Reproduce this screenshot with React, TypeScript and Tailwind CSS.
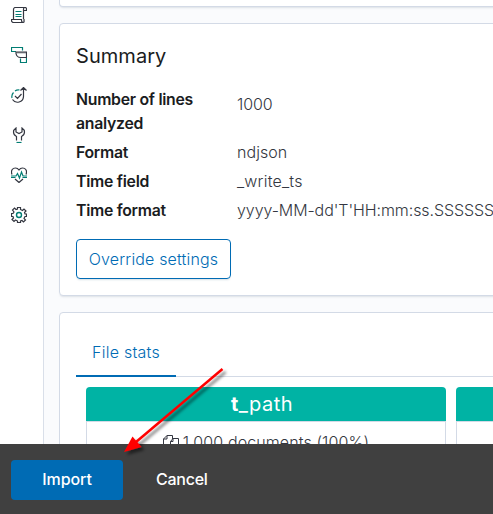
import React from 'react';

const dark = '#343741';
const teal = '#017d73';

function Icon({ children }: { children: React.ReactNode }) {
  return (
    <svg width="16" height="16" viewBox="0 0 32 32" fill="none" stroke={dark} strokeWidth="2.4" className="block">
      {children}
    </svg>
  );
}

function Sidebar() {
  return (
    <nav className="flex w-[44px] shrink-0 flex-col gap-6 border-r border-[#d9dfe9] bg-white pt-[7px] pl-[11px]">
      <Icon>
        <path d="M5 24V5a4 4 0 0 1 4-4h19a3 3 0 0 1 3 3v3h-6M25 24V4a3 3 0 0 1 3-3M1 25h20v2a4 4 0 0 0 4 4H5a4 4 0 0 1-4-4v-2zM25 31a4 4 0 0 0 1-4v-3" />
        <path d="M9 9h12M9 15h12M9 19h12" stroke={teal} />
      </Icon>
      <Icon>
        <path d="M10 9H1V1h22v6M19 23v8h12V21" stroke={teal} />
        <path d="M10 10h21v11H19c-5 0-8-3-9-8v-3z" />
        <path d="M11 11.500h19" strokeOpacity=".6" />
      </Icon>
      <Icon>
        <path d="M25 2v17a12 12 0 0 1-22 6M19 7l6-6 6 6M8 18l5 5 8-9" />
        <path d="M2 22a12 12 0 0 1 3-11M8 8a12 12 0 0 1 9-2" stroke={teal} />
      </Icon>
      <Icon>
        <path d="M11 27v-8c-4-2-6-5-6-9 0-3 2-6 5-8v8l6 3 6-3V2c3 2 5 5 5 8 0 4-2 7-6 9v8" />
        <path d="M11 31h10" stroke={teal} />
      </Icon>
      <Icon>
        <path d="M2 15C-1 7 3 2 9 2c3 0 5 1 7 4 2-3 4-4 7-4 6 0 10 5 7 13M8 24l8 7 8-7" />
        <path d="M0 18h10l3-5 4 9 4-12 3 8h8M0 21h9M23 21h9" stroke={teal} />
      </Icon>
      <Icon>
        <path d="M13 1h6v4l4 2 3-3 4 4-3 3 1 3h3v5h-3l-2 4 3 3-4 4-3-3-3 1v3h-6v-3l-4-2-3 3-4-4 3-3-1-3H1v-6h3l2-3-3-4 4-4 3 3 3-1V1z" />
        <circle cx="16" cy="16" r="5" stroke={teal} strokeWidth="2.8" />
      </Icon>
    </nav>
  );
}

const rows = [
  ['Format', 'ndjson', 'tracking-[0.05px]'],
  ['Time field', '_write_ts', 'tracking-[0.2px]'],
  ['Time format', "yyyy-MM-dd'T'HH:mm:ss.SSSSSSSSSZ", 'tracking-[-0.08px]'],
];

function Summary() {
  return (
    <section className="mt-4 h-[273px] w-[600px] shrink-0 rounded border border-[#d3dae6] bg-white px-4 pt-4 shadow-[0_2px_2px_-1px_rgba(152,162,179,0.3)]">
      <h2 className="text-[20px] leading-8 font-normal tracking-[0.05px] text-[#1a1c21]">Summary</h2>
      <dl className="mt-[15px] flex flex-col gap-[5px] leading-6">
        <div className="flex items-start">
          <dt className="relative top-px w-[161px] shrink-0 text-[15.8px] font-semibold tracking-[-0.27px] text-[#1a1c21]">
            Number of lines<br />analyzed
          </dt>
          <dd className="pt-[5px]">1000</dd>
        </div>
        {rows.map(([name, value, tracking]) => (
          <div className="flex" key={name}>
            <dt className="relative top-px w-[161px] shrink-0 text-[15.8px] font-semibold tracking-[-0.27px] text-[#1a1c21]">{name}</dt>
            <dd className={`whitespace-nowrap ${tracking}`}>{value}</dd>
          </div>
        ))}
      </dl>
      <button className="mt-[17px] block h-10 w-[155px] rounded border border-[#006bb4] pb-px text-center font-light tracking-[0.16px] whitespace-nowrap text-[#006bb4] shadow-[0_2px_2px_-1px_rgba(54,97,126,0.2)]">
        Override settings
      </button>
    </section>
  );
}

function FieldCard({ name, docs }: { name: string; docs: string }) {
  return (
    <article className="w-[360px] shrink-0">
      <h3 className="h-[34px] rounded-t bg-[#00b3a4] pr-2 text-center text-[20px] leading-[34px] font-normal tracking-[0.5px] text-white">
        {name && <><b className="font-bold">t</b>{name}</>}
      </h3>
      <div className="flex h-[100px] justify-center border border-[#d3dae6] bg-white pt-[8px] leading-6">
        {docs && (
          <>
            <svg width="16" height="16" viewBox="0 0 16 16" fill="none" stroke="#343741" className="mt-1 mr-1 shrink-0">
              <path d="M5 10.5H.5V5L4 1.5h5.5V5M4 1.5V5H.5M7.5 13.5v-6L10 4.5h5.5v9zM10 4.5v3H7.5" />
            </svg>
            <span className="tracking-[0.1px]">{docs}</span>
          </>
        )}
      </div>
    </article>
  );
}

export default function App() {
  return (
    <div className="relative flex h-[514px] w-[493px] flex-col overflow-hidden bg-[#fafbfd] font-['Inter','Liberation_Sans',sans-serif] text-[16px] font-light tracking-[-0.08px] text-[#343741]">
      <div className="flex h-[444px] shrink-0 overflow-hidden">
        <Sidebar />
        <main className="flex min-w-0 flex-1 flex-col overflow-hidden pl-[15px]">
          <div className="h-[7px] w-[600px] shrink-0 rounded-b border border-t-0 border-[#d3dae6] bg-white shadow-[0_2px_2px_-1px_rgba(152,162,179,0.3)]" />
          <Summary />
          <section className="mt-4 h-[240px] w-[600px] shrink-0 rounded border border-[#d3dae6] bg-white pt-4 pl-4">
            <div className="flex h-[48px] border-b border-[#d3dae6]">
              <div className="h-[48px] w-[100px] border-b-2 border-[#006bb4] text-center leading-[46px] tracking-[0.25px] text-[#006bb4]">
                File stats
              </div>
            </div>
            <div className="mt-[10px] flex gap-[10px] pl-[10px]">
              <FieldCard name="_path" docs="1,000 documents (100%)" />
              <FieldCard name="" docs="" />
            </div>
          </section>
        </main>
      </div>
      <footer className="flex h-[70px] shrink-0 items-start bg-[#404040] pt-4 pl-[11px] font-medium text-white">
        <button className="h-10 w-[112px] rounded bg-[#006bb4] pb-0.5">Import</button>
        <button className="ml-[33px] h-10 pb-0.5 tracking-[-0.25px]">Cancel</button>
      </footer>
      <svg className="pointer-events-none absolute top-[360px] left-[110px]" width="130" height="105" viewBox="0 0 130 105">
        <defs>
          <filter id="arrow-shadow" x="-20%" y="-20%" width="140%" height="140%">
            <feDropShadow dx="3" dy="3" stdDeviation="1.5" floodColor="#000000" floodOpacity=".5" />
          </filter>
        </defs>
        <g filter="url(#arrow-shadow)">
          <path d="M112.5 9L26 82" stroke="#ff0000" strokeWidth="2.5" />
          <path d="M14 92L22.500 76.500L31.500 87Z" fill="#ff0000" />
        </g>
      </svg>
    </div>
  );
}
